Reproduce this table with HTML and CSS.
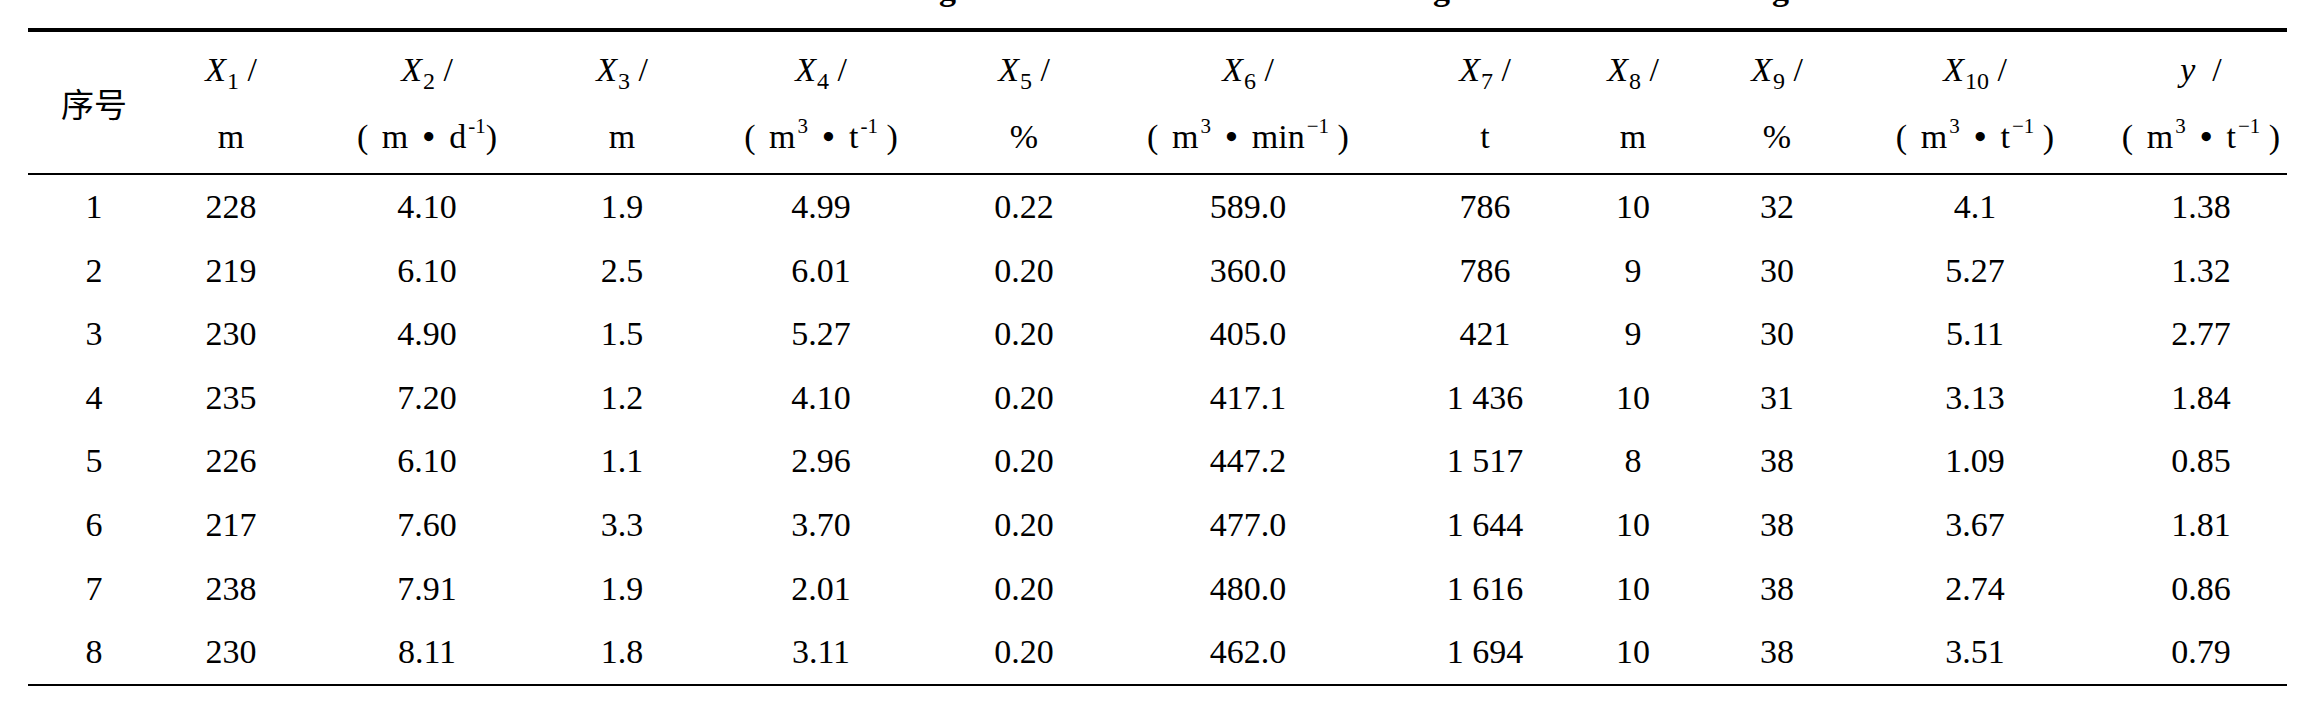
FILE: index.html
```html
<!DOCTYPE html>
<html lang="zh">
<head>
<meta charset="utf-8">
<title>Table</title>
<link rel="stylesheet" href="styles.css">
</head>
<body>
<div class="page">
  <div class="caption">
    <span class="cg cg1">g</span>
    <span class="cg cg2">g</span>
    <span class="cg cg3">g</span>
  </div>
  <table class="data">
    <colgroup>
      <col class="w1"><col class="w2"><col class="w3"><col class="w4"><col class="w5"><col class="w6">
      <col class="w7"><col class="w8"><col class="w9"><col class="w10"><col class="w11"><col class="w12">
    </colgroup>
    <thead>
      <tr>
        <th class="cjk">序号</th>
        <th><i>X</i><sub>1</sub> /<br>m</th>
        <th><i>X</i><sub>2</sub> /<br><span class="po">(</span> m <b class="dot">•</b> d<sup>-1</sup>)</th>
        <th><i>X</i><sub>3</sub> /<br>m</th>
        <th><i>X</i><sub>4</sub> /<br><span class="po">(</span> m<sup>3</sup> <b class="dot">•</b> t<sup>-1</sup> )</th>
        <th><i>X</i><sub>5</sub> /<br>%</th>
        <th><i>X</i><sub>6</sub> /<br><span class="po">(</span> m<sup>3</sup> <b class="dot">•</b> min<sup>−1</sup> )</th>
        <th><i>X</i><sub>7</sub> /<br>t</th>
        <th><i>X</i><sub>8</sub> /<br>m</th>
        <th><i>X</i><sub>9</sub> /<br>%</th>
        <th><i>X</i><sub>10</sub> /<br><span class="po">(</span> m<sup>3</sup> <b class="dot">•</b> t<sup>−1</sup> )</th>
        <th class="last"><i>y</i>&ensp;/<br><span class="po">(</span> m<sup>3</sup> <b class="dot">•</b> t<sup>−1</sup> )</th>
      </tr>
    </thead>
    <tbody>
      <tr><td>1</td><td>228</td><td>4.10</td><td>1.9</td><td>4.99</td><td>0.22</td><td>589.0</td><td>786</td><td>10</td><td>32</td><td>4.1</td><td class="last">1.38</td></tr>
      <tr><td>2</td><td>219</td><td>6.10</td><td>2.5</td><td>6.01</td><td>0.20</td><td>360.0</td><td>786</td><td>9</td><td>30</td><td>5.27</td><td class="last">1.32</td></tr>
      <tr><td>3</td><td>230</td><td>4.90</td><td>1.5</td><td>5.27</td><td>0.20</td><td>405.0</td><td>421</td><td>9</td><td>30</td><td>5.11</td><td class="last">2.77</td></tr>
      <tr><td>4</td><td>235</td><td>7.20</td><td>1.2</td><td>4.10</td><td>0.20</td><td>417.1</td><td>1 436</td><td>10</td><td>31</td><td>3.13</td><td class="last">1.84</td></tr>
      <tr><td>5</td><td>226</td><td>6.10</td><td>1.1</td><td>2.96</td><td>0.20</td><td>447.2</td><td>1 517</td><td>8</td><td>38</td><td>1.09</td><td class="last">0.85</td></tr>
      <tr><td>6</td><td>217</td><td>7.60</td><td>3.3</td><td>3.70</td><td>0.20</td><td>477.0</td><td>1 644</td><td>10</td><td>38</td><td>3.67</td><td class="last">1.81</td></tr>
      <tr><td>7</td><td>238</td><td>7.91</td><td>1.9</td><td>2.01</td><td>0.20</td><td>480.0</td><td>1 616</td><td>10</td><td>38</td><td>2.74</td><td class="last">0.86</td></tr>
      <tr class="end"><td>8</td><td>230</td><td>8.11</td><td>1.8</td><td>3.11</td><td>0.20</td><td>462.0</td><td>1 694</td><td>10</td><td>38</td><td>3.51</td><td class="last">0.79</td></tr>
    </tbody>
  </table>
</div>
</body>
</html>
```

FILE: styles.css
```css
html, body {
  margin: 0;
  padding: 0;
  background: #ffffff;
}

body {
  font-family: "Liberation Serif", "Times New Roman", "Noto Sans CJK SC", serif;
  color: #000000;
  font-size: 34px;
}

.page {
  padding: 0 20px 0 28px;
}

.caption {
  display: flex;
  height: 28px;
  overflow: hidden;
}

.cg {
  font-weight: bold;
  line-height: 34px;
  margin-top: -28px;
  width: 17px;
}

.cg1 { margin-left: 911px; }
.cg2 { margin-left: 477px; }
.cg3 { margin-left: 322px; }

.data {
  table-layout: fixed;
  width: 2259px;
  border-collapse: separate;
  border-spacing: 0;
}

.w1 { width: 132px; }
.w2 { width: 142px; }
.w3 { width: 250px; }
.w4 { width: 140px; }
.w5 { width: 258px; }
.w6 { width: 148px; }
.w7 { width: 300px; }
.w8 { width: 174px; }
.w9 { width: 122px; }
.w10 { width: 166px; }
.w11 { width: 230px; }
.w12 { width: 197px; }

.data th {
  font-weight: normal;
  text-align: center;
  vertical-align: middle;
  white-space: nowrap;
  line-height: 67px;
  padding: 4px 0 3px 0;
  border-top: 4px solid #000;
  border-bottom: 2px solid #000;
}

.data th.cjk {
  font-family: "Noto Sans CJK SC", sans-serif;
  font-size: 33px;
}

.data td {
  text-align: center;
  white-space: nowrap;
  line-height: 63.6px;
  padding: 0;
}

.data .last {
  padding-left: 25px;
}

.data tr.end td {
  border-bottom: 2px solid #000;
}

sub {
  font-size: 24px;
  line-height: 0;
  vertical-align: -8px;
  margin-left: 1px;
}

sup {
  font-size: 21px;
  line-height: 0;
  vertical-align: 15px;
  margin-left: 2px;
}

.po {
  margin-right: 5px;
}

.dot {
  font-weight: bold;
  margin: 0 6px;
}
```
